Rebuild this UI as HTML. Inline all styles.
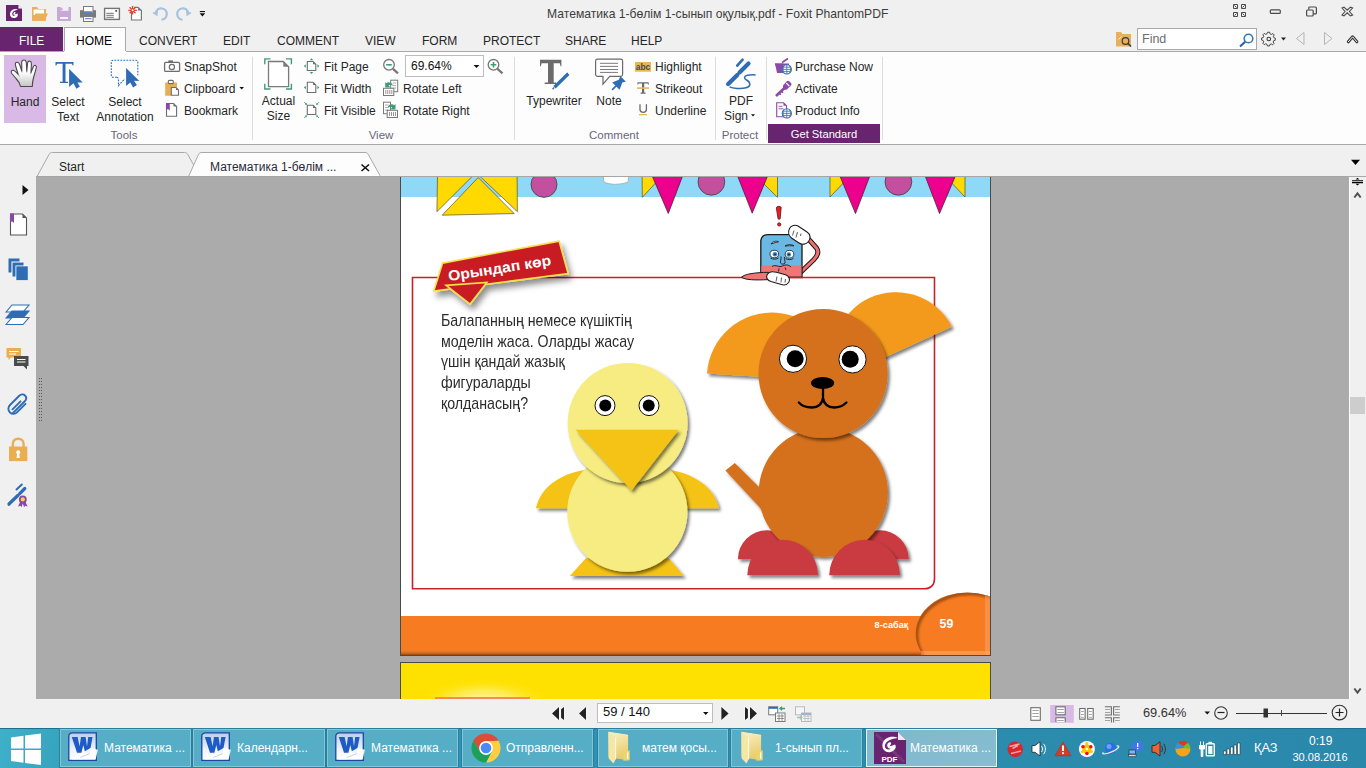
<!DOCTYPE html>
<html><head><meta charset="utf-8">
<style>
*{margin:0;padding:0;box-sizing:border-box}
html,body{width:1366px;height:768px;overflow:hidden;background:#f0f0f0;font-family:"Liberation Sans",sans-serif;position:relative}
.a{position:absolute}
.t{position:absolute;white-space:nowrap;font-size:12px;line-height:12px;color:#262626}
svg{position:absolute;overflow:visible}
</style></head><body>

<!-- ===== TITLE BAR ===== -->
<div class="a" style="left:0;top:0;width:1366px;height:51px;background:#f0f0f0"></div>
<div class="t" style="left:547px;top:8px;color:#3c3c3c;font-size:12.15px">Математика 1-бөлім 1-сынып оқулық.pdf - Foxit PhantomPDF</div>

<!-- ===== RIBBON TABS ===== -->
<div class="a" style="left:0;top:27px;width:63px;height:24px;background:#68246f"></div>
<div class="t" style="left:19px;top:35px;color:#fff">FILE</div>
<div class="a" style="left:64px;top:27px;width:62px;height:25px;background:#fdfdfd;border:1px solid #a9a9a9;border-bottom:none"></div>
<div class="t" style="left:76px;top:35px;color:#000">HOME</div>
<div class="t" style="left:139px;top:35px">CONVERT</div>
<div class="t" style="left:223px;top:35px">EDIT</div>
<div class="t" style="left:277px;top:35px">COMMENT</div>
<div class="t" style="left:365px;top:35px">VIEW</div>
<div class="t" style="left:422px;top:35px">FORM</div>
<div class="t" style="left:483px;top:35px">PROTECT</div>
<div class="t" style="left:565px;top:35px">SHARE</div>
<div class="t" style="left:631px;top:35px">HELP</div>

<!-- ===== RIBBON BODY ===== -->
<div class="a" style="left:0;top:51px;width:1366px;height:1px;background:#a9a9a9"></div>
<div class="a" style="left:64px;top:51px;width:62px;height:1px;background:#fdfdfd"></div>
<div class="a" style="left:0;top:52px;width:1366px;height:92px;background:#fdfdfd"></div>
<div class="a" style="left:0;top:144px;width:1366px;height:1px;background:#a9a9a9"></div>


<!-- Tools group -->
<div class="a" style="left:4px;top:55px;width:42px;height:68px;background:#d9bae6"></div>
<div class="t" style="left:4px;top:96px;width:42px;text-align:center">Hand</div>
<div class="t" style="left:40px;top:96px;width:56px;text-align:center">Select</div>
<div class="t" style="left:40px;top:111px;width:56px;text-align:center">Text</div>
<div class="t" style="left:94px;top:96px;width:62px;text-align:center">Select</div>
<div class="t" style="left:94px;top:111px;width:62px;text-align:center">Annotation</div>
<div class="t" style="left:184px;top:61px">SnapShot</div>
<div class="t" style="left:184px;top:83px">Clipboard</div>
<div class="t" style="left:184px;top:105px">Bookmark</div>
<div class="t" style="left:94px;top:129px;width:60px;text-align:center;color:#67677a;font-size:11.5px">Tools</div>
<div class="a" style="left:252px;top:57px;width:1px;height:83px;background:#dcdcdc"></div>
<!-- View group -->
<div class="t" style="left:256px;top:95px;width:45px;text-align:center">Actual</div>
<div class="t" style="left:256px;top:110px;width:45px;text-align:center">Size</div>
<div class="t" style="left:324px;top:61px">Fit Page</div>
<div class="t" style="left:324px;top:83px">Fit Width</div>
<div class="t" style="left:324px;top:105px">Fit Visible</div>
<div class="a" style="left:405px;top:55px;width:79px;height:22px;background:#fff;border:1px solid #bdbdbd"></div>
<div class="t" style="left:411px;top:60px;color:#111">69.64%</div>
<div class="t" style="left:403px;top:83px">Rotate Left</div>
<div class="t" style="left:403px;top:105px">Rotate Right</div>
<div class="t" style="left:351px;top:129px;width:60px;text-align:center;color:#67677a;font-size:11.5px">View</div>
<div class="a" style="left:514px;top:57px;width:1px;height:83px;background:#dcdcdc"></div>
<!-- Comment group -->
<div class="t" style="left:520px;top:95px;width:68px;text-align:center">Typewriter</div>
<div class="t" style="left:590px;top:95px;width:38px;text-align:center">Note</div>
<div class="t" style="left:655px;top:61px">Highlight</div>
<div class="t" style="left:655px;top:83px">Strikeout</div>
<div class="t" style="left:655px;top:105px">Underline</div>
<div class="t" style="left:579px;top:129px;width:70px;text-align:center;color:#67677a;font-size:11.5px">Comment</div>
<div class="a" style="left:715px;top:57px;width:1px;height:83px;background:#dcdcdc"></div>
<!-- Protect group -->
<div class="t" style="left:721px;top:95px;width:40px;text-align:center">PDF</div>
<div class="t" style="left:724px;top:110px">Sign</div>
<div class="t" style="left:707px;top:129px;width:66px;text-align:center;color:#67677a;font-size:11.5px">Protect</div>
<div class="a" style="left:766px;top:57px;width:1px;height:83px;background:#dcdcdc"></div>
<!-- Purchase group -->
<div class="t" style="left:795px;top:61px">Purchase Now</div>
<div class="t" style="left:795px;top:83px">Activate</div>
<div class="t" style="left:795px;top:105px">Product Info</div>
<div class="a" style="left:768px;top:124px;width:112px;height:19px;background:#68246f"></div>
<div class="t" style="left:768px;top:128px;width:112px;text-align:center;color:#fff;font-size:11.2px">Get Standard</div>
<div class="a" style="left:882px;top:57px;width:1px;height:83px;background:#dcdcdc"></div>


<!-- ===== ICON OVERLAY (chrome) ===== -->
<svg style="left:0;top:0" width="1366" height="768" viewBox="0 0 1366 768">
<defs>
<linearGradient id="handg" x1="0" y1="0" x2="0" y2="1"><stop offset="0.45" stop-color="#fff"/><stop offset="1" stop-color="#c4c4c4"/></linearGradient>
</defs>
<!-- title bar: foxit logo -->
<path d="M6 5H18.5L22 8.5V21H6Z" fill="#68246f"/>
<path d="M18.5 5V8.5H22" fill="#fff"/>
<path d="M18 9.5C15 8 10.5 9.5 10 13.5C9.7 17 12.5 18.5 15 18C17.5 17.5 18.5 15 17.5 13.5L14.5 14.5L15.5 13C16 12 14 11.5 13.5 13C13 14.5 14 16 15.5 15.5C13 17 11.5 14.5 12.5 12.5C13.5 10.5 16.5 10 18 9.5Z" fill="#fff"/>
<!-- folder -->
<path d="M32 7H37L38.5 9H46V20.8H32Z" fill="#e8b05a"/>
<path d="M33.5 9.5H44V15H33.5Z" fill="#fff"/>
<path d="M35.5 13.5H48L44.5 20.8H32Z" fill="#e8b05a"/>
<!-- save -->
<rect x="57" y="7" width="14" height="14" fill="#c8a8d4"/>
<rect x="60.8" y="7" width="7.7" height="3.8" fill="#f3eef5"/>
<rect x="61" y="7.8" width="1.5" height="2.5" fill="#c8a8d4"/>
<rect x="60" y="17" width="8" height="2" fill="#f7f3f8"/>
<!-- printer -->
<path d="M80 10.2H96V17.6H80Z" fill="#7a7a7a"/>
<rect x="83.5" y="6.5" width="9.5" height="7" fill="#fff" stroke="#7a7a7a" stroke-width="1"/>
<rect x="84" y="11.3" width="8.5" height="1.6" fill="#3e7cc4"/>
<rect x="83.5" y="16.5" width="9.5" height="5" fill="#fff" stroke="#7a7a7a" stroke-width="1"/>
<rect x="85" y="18.2" width="6.5" height="1" fill="#3e7cc4"/>
<!-- email -->
<rect x="104.6" y="8.4" width="14.8" height="11" fill="#fff" stroke="#747474" stroke-width="1.4"/>
<rect x="115.3" y="10" width="1.8" height="1.8" fill="#1f5fb4"/>
<path d="M106.3 13.3H113.8M106.3 15.3H113.8M106.3 17.3H113.8" stroke="#747474" stroke-width="1"/>
<!-- new -->
<path d="M131.5 9.5V20H141.4V10.5L138 7.3H134" fill="#fff" stroke="#777" stroke-width="1.2"/>
<path d="M138 7.3V10.5H141.4Z" fill="#777"/>
<path d="M132.6 6V14.6M128.3 10.3H136.9M129.6 7.3L135.6 13.3M135.6 7.3L129.6 13.3" stroke="#d9472a" stroke-width="1.3"/>
<circle cx="132.6" cy="10.3" r="1" fill="#fff"/>
<!-- undo/redo -->
<path d="M155.8 12.5A5.6 5.6 0 1 1 161.5 19.6" fill="none" stroke="#a6c2de" stroke-width="2.2"/>
<path d="M152.3 13L158 10.5L157.5 16.3Z" fill="#a6c2de"/>
<path d="M188.2 12.5A5.6 5.6 0 1 0 182.5 19.6" fill="none" stroke="#a6c2de" stroke-width="2.2"/>
<path d="M191.7 13L186 10.5L186.5 16.3Z" fill="#a6c2de"/>
<rect x="199.8" y="11" width="5.2" height="1.1" fill="#111"/>
<path d="M199.6 13.2H205.2L202.4 16.6Z" fill="#111"/>

<!-- window controls -->
<g stroke="#4a4a4a" stroke-width="1.2" fill="none">
<path d="M1233.5 4.5H1237.5V8.5M1233.5 4.5V8.5H1237.5M1234.5 5.5L1236.5 7.5M1241.5 4.5H1245.5V8.5H1241.5ZM1242.5 7.5L1244.5 5.5M1233.5 12.5H1237.5V16.5H1233.5ZM1234.5 15.5L1236.5 13.5M1241.5 12.5H1245.5V16.5H1241.5ZM1242.5 13.5L1244.5 15.5" stroke-width="1"/>
<rect x="1270.3" y="9.8" width="10" height="3.6" rx="1"/>
<rect x="1306.6" y="10" width="6.6" height="6" rx="1"/>
<path d="M1308.8 9.8V7.8C1308.8 7.3 1309.1 7 1309.6 7H1315.4C1315.9 7 1316.4 7.4 1316.4 7.9V12.9C1316.4 13.4 1316 13.8 1315.4 13.8H1313.4"/>
</g>
<path d="M1342 8L1344 7.2L1347.2 10.2L1350.4 7.2L1352.6 8L1349.4 11.5L1352.6 15L1350.4 15.8L1347.2 12.8L1344 15.8L1342 15L1345 11.5Z" fill="none" stroke="#4a4a4a" stroke-width="1.1"/>

<!-- find row -->
<path d="M1116 32H1121L1122.5 34H1131V46.5H1116Z" fill="#e8b05a"/>
<circle cx="1125.5" cy="41" r="3.3" fill="#e8b05a" stroke="#3a3a3a" stroke-width="1.2"/>
<path d="M1127.8 43.3L1131 46.5" stroke="#3a3a3a" stroke-width="1.6"/>
<path d="M1118.5 39.5L1121.5 36.5" stroke="#fff" stroke-width="0.8"/>
<rect x="1137.5" y="28.5" width="119" height="21" fill="#fff" stroke="#a8a8a8" stroke-width="1"/>
<circle cx="1248.5" cy="38.5" r="4.3" fill="none" stroke="#2c7bbf" stroke-width="1.6"/>
<path d="M1245.2 41.8L1240 46.5" stroke="#2a5ea0" stroke-width="2"/>
<!-- gear -->
<g transform="translate(1268.8,39)">
<path d="M-1.3 -7.3H1.3L1.8 -5.2L3.6 -4.4L5.4 -5.6L7.2 -3.8L6 -2L6.8 -0.2L8.5 0.4V3L6.6 3.5L5.7 5.3L6.9 7.1L5.1 8.9L3.3 7.7L1.5 8.5L1 10.3H-1.6L-2.1 8.3L-3.9 7.5L-5.7 8.7L-7.5 6.9L-6.3 5.1L-7.1 3.3L-9 2.7V0.1L-7 -0.4L-6.2 -2.2L-7.4 -4L-5.6 -5.8L-3.8 -4.6L-2 -5.4Z" transform="scale(0.78) translate(-0.2,-1.4)" fill="none" stroke="#3a3a3a" stroke-width="1.2"/>
<circle cx="0" cy="0" r="1.8" fill="none" stroke="#3a3a3a" stroke-width="1.1"/>
</g>
<path d="M1281 37.5H1286L1283.5 40.5Z" fill="#222"/>
<path d="M1304 32.5L1296.5 38.5L1304 44.5Z" fill="none" stroke="#b5b5b5" stroke-width="1"/>
<path d="M1324.5 32.5L1332 38.5L1324.5 44.5Z" fill="none" stroke="#b5b5b5" stroke-width="1"/>
<path d="M1348.3 41.8L1352.6 36.8L1356.9 41.8" fill="none" stroke="#3a3a3a" stroke-width="3" stroke-linejoin="round" stroke-linecap="round"/><path d="M1348.3 41.8L1352.6 36.8L1356.9 41.8" fill="none" stroke="#f0f0f0" stroke-width="1" stroke-linejoin="round" stroke-linecap="round"/>

<!-- Hand -->
<path d="M20.5 86.5C19.8 83 18 80.5 16 78.5L11.8 73.5C10.6 72 11.3 70.2 13 70.3C14.5 70.4 16 72 18.2 74.5L15.5 65.5C15 63.5 15.6 62.2 17 62.2C18.3 62.2 19.2 63.2 19.8 65L21.8 71L21.7 62.5C21.7 60.8 22.6 60 24 60C25.4 60 26.2 61 26.3 62.5L26.8 71.2L27.6 63C27.8 61.7 28.6 60.9 29.8 61.1C31 61.3 31.5 62.3 31.4 63.7L31 72.5L33.2 67C33.7 65.7 34.6 65.1 35.5 65.5C36.4 65.9 36.6 66.9 36.2 68.2L33.3 78.5C32.5 81.5 32.4 83.5 32.3 86.5Z" fill="url(#handg)" stroke="#4a4a4a" stroke-width="1.1" stroke-linejoin="round"/>
<path d="M18.2 74.5L19.5 76.5M21.8 71L22 72.5M26.8 71.2V72.5M31 72.5L30.7 74" stroke="#777" stroke-width="0.7"/>

<!-- Select Text -->
<path d="M55.5 62H73.5V65.5L72.8 65.5L71.8 63.8H65.5V81.8H68V83H60V81.8H62.6V63.8H57.2L56.2 65.5H55.5Z" fill="#2e6db4"/>
<path d="M69.1 68.9V87L73.5 83.3L76.4 88.7L79.9 86.6L77.4 82.4L82.8 82.4Z" fill="#2e6db4"/>
<!-- Select Annotation -->
<path d="M116.8 77.3H113.2C112 77.3 111.3 76.6 111.3 75.3V62.2C111.3 61 112 60.2 113.2 60.2H135.8C137 60.2 137.8 61 137.8 62.2V75.3" fill="none" stroke="#2e6db4" stroke-width="1.1" stroke-dasharray="1.8 1.2"/>
<path d="M116.8 77.3C118 77.5 118.5 78.2 118.5 79.5V85.6L124.8 78.8" fill="none" stroke="#2e6db4" stroke-width="1.1" stroke-dasharray="1.8 1.2"/>
<path d="M126.1 67.9V86L130.3 82.6L133.1 87.4L136.9 85L134 80.8L139.4 81Z" fill="#2e6db4"/>

<!-- SnapShot -->
<rect x="164.6" y="62.4" width="15" height="9" rx="1.2" fill="#fff" stroke="#6d6d6d" stroke-width="1.3"/>
<rect x="168.3" y="60.4" width="4.6" height="2.2" fill="#6d6d6d"/>
<circle cx="171.9" cy="67" r="2.6" fill="none" stroke="#6d6d6d" stroke-width="1.2"/>
<!-- Clipboard -->
<path d="M165.2 82.5H177V87H171V95.8H165.2Z" fill="#e9ad52"/>
<rect x="168.3" y="80.4" width="5" height="3.2" rx="1" fill="#fff" stroke="#6d6d6d" stroke-width="1.1"/>
<path d="M171.3 87.5H176L178.5 90V95.3H171.3Z" fill="#fff" stroke="#6d6d6d" stroke-width="1.1"/>
<path d="M176 87.5V90H178.5Z" fill="#6d6d6d"/>
<!-- Bookmark -->
<path d="M166.5 103.5H173.5L176.6 106.6V116.3H166.5Z" fill="#fff" stroke="#6d6d6d" stroke-width="1.1"/>
<path d="M173.5 103.5V106.6H176.6Z" fill="#6d6d6d"/>
<path d="M166 103H169.8V110.5L167.9 109L166 110.5Z" fill="#8748a7"/>
<path d="M239.4 87H244L241.7 89.6Z" fill="#111"/>

<!-- Actual Size -->
<path d="M264.8 64.2V58.9H270.5M286 58.9H291.4V64.2M264.8 83.8V89H270.5M286 89H291.4V83.8" fill="none" stroke="#3a9e74" stroke-width="1.4"/>
<path d="M268.5 61.5H283.3L288.6 66.8V86.6H268.5Z" fill="#fff" stroke="#7a7a7a" stroke-width="1.3"/>
<path d="M283.3 61.5V66.8H288.6Z" fill="#7a7a7a"/>
<!-- Fit Page -->
<path d="M307.3 61.5H313L315.8 64.3V70.5H307.3Z" fill="#fff" stroke="#6d6d6d" stroke-width="1.1"/>
<path d="M313 61.5V64.3H315.8Z" fill="#6d6d6d"/>
<path d="M303.8 66L305.8 64.2V67.8ZM319.4 66L317.4 64.2V67.8ZM311.5 58.2L309.7 60.2H313.3ZM311.5 74L309.7 72H313.3Z" fill="#3a9e74"/>
<!-- Fit Width -->
<path d="M307.3 82.3H313L315.8 85.1V92.5H307.3Z" fill="#fff" stroke="#6d6d6d" stroke-width="1.1"/>
<path d="M313 82.3V85.1H315.8Z" fill="#6d6d6d"/>
<path d="M303.8 87.5L305.8 85.7V89.3ZM319.4 87.5L317.4 85.7V89.3Z" fill="#3a9e74"/>
<!-- Fit Visible -->
<path d="M307.3 105.3H313L315.8 108.1V114.5H307.3Z" fill="#fff" stroke="#6d6d6d" stroke-width="1.1"/>
<path d="M313 105.3V108.1H315.8Z" fill="#6d6d6d"/>
<path d="M304.2 102.2L306.6 104.6M319 102.2L316.6 104.6M304.2 118L306.6 115.6M319 118L316.6 115.6" stroke="#3a9e74" stroke-width="1"/>
<path d="M306.8 104.8V102.8L304.8 104.8ZM316.4 104.8V102.8L318.4 104.8ZM306.8 115.4V117.4L304.8 115.4ZM316.4 115.4V117.4L318.4 115.4Z" fill="#3a9e74"/>
<!-- zoom out/in -->
<circle cx="389" cy="64.8" r="5.3" fill="#fff" stroke="#777" stroke-width="1.3"/>
<path d="M386.2 64.8H391.8" stroke="#3a9e74" stroke-width="1.6"/>
<path d="M393 68.9L398 73.4" stroke="#777" stroke-width="2.2"/>
<circle cx="493.5" cy="64.8" r="5.3" fill="#fff" stroke="#777" stroke-width="1.3"/>
<path d="M490.7 64.8H496.3M493.5 62V67.6" stroke="#3a9e74" stroke-width="1.6"/>
<path d="M497.5 68.9L502.5 73.4" stroke="#777" stroke-width="2.2"/>
<path d="M473.5 65H479.5L476.5 68Z" fill="#111"/>
<!-- Rotate Left -->
<rect x="390.7" y="80.2" width="7" height="11.5" fill="#fff" stroke="#7a7a7a" stroke-width="1"/>
<path d="M392.5 83H396M392.5 85.5H396M392.5 88H396" stroke="#9a9a9a" stroke-width="0.8"/>
<rect x="383.5" y="88.3" width="10.3" height="7.2" fill="#fff" stroke="#7a7a7a" stroke-width="1"/>
<path d="M385.8 90V94M387.8 90V94M389.8 90V94M391.8 90V94" stroke="#8a8a8a" stroke-width="0.9"/>
<path d="M392.5 84.5C391 81.8 387.8 81.6 386.3 83.2L385.2 82V87.5H390.5L388.5 85.6C389.8 84.5 391 84.8 392.5 85.5Z" fill="#3a9e74"/>
<!-- Rotate Right -->
<rect x="383.5" y="102.2" width="7" height="11.5" fill="#fff" stroke="#7a7a7a" stroke-width="1"/>
<path d="M385 105H388.5M385 107.5H388.5M385 110H388.5" stroke="#9a9a9a" stroke-width="0.8"/>
<rect x="387.2" y="110.3" width="10.3" height="7.2" fill="#fff" stroke="#7a7a7a" stroke-width="1"/>
<path d="M389.5 112V116M391.5 112V116M393.5 112V116M395.5 112V116" stroke="#8a8a8a" stroke-width="0.9"/>
<path d="M388 106.5C389.5 103.8 392.7 103.6 394.2 105.2L395.5 104V109.5H390.2L392.2 107.6C390.9 106.5 389.5 106.8 388 107.5Z" fill="#3a9e74"/>

<!-- Typewriter -->
<path d="M540 59.8H561.4V66.2L560.6 66.2L559.8 63.2H553.7V82.6H556V84.1H544.7V82.6H548V63.2H541.6L540.8 66.2H540Z" fill="#6b6b6b"/>
<path d="M554.5 87.2L568.5 73.5" stroke="#2e6db4" stroke-width="3.3"/>
<path d="M552.6 89.3L554 87.5" stroke="#2e6db4" stroke-width="1.4"/>
<path d="M567.5 72.5L570.2 75.2" stroke="#fff" stroke-width="0.8"/>
<!-- Note -->
<path d="M597.5 59.2H620.8C621.9 59.2 622.6 59.9 622.6 61V74.5C622.6 75.6 621.9 76.3 620.8 76.3H609.7L603 84.2V76.3H597.5C596.3 76.3 595.6 75.6 595.6 74.5V61C595.6 59.9 596.3 59.2 597.5 59.2Z" fill="#fff" stroke="#6a6a6a" stroke-width="1.2"/>
<path d="M600 63.3H618M600 66.4H618M600 69.5H618M600 72.4H618" stroke="#6a6a6a" stroke-width="0.9"/>
<path d="M612.6 89.4L616.5 85.5" stroke="#2e6db4" stroke-width="1.7" stroke-linecap="round"/>
<path d="M620.4 76.2L625.8 81.6L622.3 82.6L619.6 89.7L614.8 85L612.2 82.4L618.8 79.8Z" fill="#2e6db4"/>
<!-- Highlight -->
<rect x="635" y="62" width="16" height="9.7" fill="#e9b55a"/>
<text x="643" y="70" font-family="Liberation Sans" font-size="9.5" font-weight="bold" fill="#4a4a4a" text-anchor="middle" textLength="14.5" lengthAdjust="spacingAndGlyphs">abc</text>
<!-- Strikeout -->
<path d="M637.5 82.3H648.7V84.8H648.2L647.7 83.5H644.2V92.5H645.6V93.7H640.6V92.5H642V83.5H638.5L638 84.8H637.5Z" fill="#6b6b6b"/>
<rect x="637" y="87.3" width="12" height="1.6" fill="#e9b55a"/>
<!-- Underline -->
<path d="M640 104.2V109.6C640 111.3 641.2 112.4 643.2 112.4C645.2 112.4 646.4 111.3 646.4 109.6V104.2" fill="none" stroke="#6b6b6b" stroke-width="1.3"/>
<rect x="639" y="114" width="8" height="1.3" fill="#e9b55a"/>

<!-- PDF Sign -->
<path d="M728.2 84L737.3 75" stroke="#2e6db4" stroke-width="4.2" stroke-linecap="round"/>
<path d="M739.5 72.6L748.5 63.5" stroke="#2e6db4" stroke-width="4.2" stroke-linecap="round"/>
<path d="M737.2 65.6L742.6 59.6" stroke="#2e6db4" stroke-width="2.6" stroke-linecap="round"/>
<path d="M726.6 85.2L728.5 83" stroke="#2e6db4" stroke-width="1.6"/>
<path d="M729.5 86.8C733 88.5 741 89 746 87.8C751 86.5 751 82.5 746.5 80C743.5 78.3 744 76 747.5 75.2C750 74.7 753 74.8 755.6 74.9" fill="none" stroke="#2e6db4" stroke-width="1.5"/>
<path d="M751 114.2H755L753 116.4Z" fill="#111"/>

<!-- Purchase Now -->
<path d="M775 63.5H783.5V73H777Z" fill="#8b4aa5"/>
<path d="M775 63.5H789V65.5H775Z" fill="#8b4aa5"/>
<path d="M782 62.5L788 58.5" stroke="#8b4aa5" stroke-width="1.6"/>
<circle cx="786.8" cy="69.4" r="4.6" fill="#fff" stroke="#2e6db4" stroke-width="1.1"/>
<path d="M782.2 69.4H791.4M786.8 64.8V74M784 65.8C782.8 68 782.8 71 784 73M789.6 65.8C790.8 68 790.8 71 789.6 73M783 67.2H790.6M783 71.6H790.6" stroke="#2e6db4" stroke-width="0.8" fill="none"/>
<!-- Activate -->
<path d="M783 85.5L786.8 81.2C787.5 80.5 788.5 80.5 789.2 81.2L791 83C791.7 83.7 791.7 84.7 791 85.4L786.8 89.4C786 90 785 90 784.4 89.4L783 88Z" fill="#8b4aa5"/>
<path d="M786.2 83L789.2 86" stroke="#fff" stroke-width="1.1"/>
<path d="M784.5 88L776 96" stroke="#8b4aa5" stroke-width="2.6"/>
<path d="M779 93L780.8 94.8M781.3 91L783 92.8" stroke="#8b4aa5" stroke-width="1.5"/>
<!-- Product Info -->
<path d="M776.7 102.7H783.5L786.5 105.7V116.8H776.7Z" fill="#fff" stroke="#8b4aa5" stroke-width="1.1"/>
<path d="M783.5 102.7V105.7H786.5Z" fill="#8b4aa5"/>
<path d="M778.5 106.3H782.5M778.5 108.8H783.5" stroke="#8b4aa5" stroke-width="0.9"/>
<circle cx="786.8" cy="113.4" r="4.6" fill="#fff" stroke="#2e6db4" stroke-width="1.1"/>
<path d="M782.2 113.4H791.4M786.8 108.8V118M784 109.8C782.8 112 782.8 115 784 117M789.6 109.8C790.8 112 790.8 115 789.6 117M783 111.2H790.6M783 115.6H790.6" stroke="#2e6db4" stroke-width="0.8" fill="none"/>
</svg>

<div class="t" style="left:1142px;top:33px;color:#6d6d6d;font-size:12.5px">Find</div>
<!-- ===== DOC TABS ===== -->


<svg style="left:0;top:145px" width="1366" height="32" viewBox="0 145 1366 32">
<path d="M37 176.5L49 154.5C49.8 153 50.8 152.5 52.5 152.5H184.5C186 152.5 187 153 187.8 154.5L200 176.5" fill="#f0f0f0" stroke="#a9a9a9" stroke-width="1"/>
<path d="M188.5 176.5L198.5 154.5C199.3 153 200.3 152.5 202 152.5H365C366.5 152.5 367.5 153 368.3 154.5L380.5 176.5" fill="#fdfdfd" stroke="#a9a9a9" stroke-width="1"/>
<path d="M361.5 164.5L369 171M369 164.5L361.5 171" stroke="#111" stroke-width="1.6"/>
<path d="M1351 159.8H1360L1355.5 165Z" fill="#000"/>
</svg>
<div class="t" style="left:59px;top:161px">Start</div>
<div class="t" style="left:210px;top:161px;color:#2a2a3a">Математика 1-бөлім ...</div>

<!-- ===== CONTENT ===== -->
<div class="a" style="left:0;top:176px;width:36px;height:523px;background:#f0f0f0"></div>
<div class="a" style="left:36px;top:176px;width:1313px;height:523px;background:#ababab"></div>
<div class="a" style="left:1349px;top:176px;width:17px;height:523px;background:#f0f0f0"></div>
<div class="a" style="left:1349px;top:176px;width:17px;height:1px;background:#a9a9a9"></div>



<!-- ===== PDF PAGE ===== -->
<svg style="left:36px;top:176px" width="1313" height="523" viewBox="36 176 1313 523">
<defs>
<filter id="ds" x="-20%" y="-20%" width="150%" height="150%"><feDropShadow dx="2.2" dy="2.6" stdDeviation="1.6" flood-color="#000" flood-opacity="0.5"/></filter>
<filter id="ds2" x="-20%" y="-30%" width="150%" height="180%"><feDropShadow dx="3" dy="5" stdDeviation="3" flood-color="#000" flood-opacity="0.45"/></filter>
<filter id="blur1"><feGaussianBlur stdDeviation="1.2"/></filter>
<filter id="ishadow" x="-10%" y="-10%" width="120%" height="120%">
<feOffset dx="2.5" dy="2.5"/><feGaussianBlur stdDeviation="1.6" result="o"/>
<feComposite in="SourceGraphic" in2="o" operator="out" result="edge"/>
</filter>
<linearGradient id="obot" x1="0" y1="0" x2="0" y2="1"><stop offset="0" stop-color="#f47b20" stop-opacity="0"/><stop offset="1" stop-color="#8a4a18"/></linearGradient>
<clipPath id="pg1"><rect x="401" y="177" width="589" height="478"/></clipPath>
<radialGradient id="ylglow" cx="0.5" cy="0.5" r="0.5"><stop offset="0" stop-color="#fff9c0"/><stop offset="0.5" stop-color="#ffef70" stop-opacity="0.7"/><stop offset="1" stop-color="#ffe100" stop-opacity="0"/></radialGradient>
</defs>
<rect x="36" y="176" width="1313" height="1" fill="#a6a6a6"/>
<!-- page 1 -->
<rect x="400" y="177" width="591" height="479" fill="#4a4a4a"/>
<rect x="401" y="177" width="589" height="478" fill="#fff"/>
<g clip-path="url(#pg1)">
<rect x="401" y="177" width="589" height="20" fill="#8fd8f6"/>
<!-- top-left yellow shapes -->
<g fill="#ffd900" stroke="#3a3a2a" stroke-width="0.6">
<path d="M437.5 176L472.6 176L436.9 211.7Z"/>
<path d="M479.6 176L517.1 176L517.4 211.7Z"/>
<path d="M478.2 177.5L514.2 213.6L442.2 215.2Z"/>
</g>
<circle cx="544" cy="184.4" r="13" fill="#c2509e" stroke="#333" stroke-width="0.7"/>
<path d="M603.5 176V181C603.5 183 612 184.5 616 184.3C621 184 628.4 183 628.4 181V176Z" fill="#fff" stroke="#9aaab5" stroke-width="0.8"/>
<!-- bunting -->
<g fill="#ffd900" stroke="#3a3a2a" stroke-width="0.6">
<path d="M642.1 176H662L642.3 197.4Z"/>
<path d="M756 176H777.5V197.4Z"/>
<path d="M830 176H850L830 197Z"/>
<path d="M945 176H965V197Z"/>
</g>
<g fill="#ec008c" stroke="#3a1a2a" stroke-width="0.7">
<path d="M652.2 176H682.6L668.3 213.5Z"/>
<path d="M737.6 176H767.6L752.2 213.2Z"/>
<path d="M839.9 176H869.8L855.5 213.6Z"/>
<path d="M925.2 176H955.4L939.5 213.6Z"/>
</g>
<circle cx="711.4" cy="181.8" r="13.4" fill="#c2509e" stroke="#333" stroke-width="0.7"/>
<circle cx="898.4" cy="181.8" r="13.4" fill="#c2509e" stroke="#333" stroke-width="0.7"/>

<!-- red box -->
<path d="M412.5 277.5H934.5V579C934.5 585 930.5 588.8 924.5 588.8H412.5Z" fill="none" stroke="#cc1f2b" stroke-width="1.6"/>

<!-- banner -->
<g filter="url(#ds2)">
<path d="M433.8 291L442.6 263.1L559.1 241.1L568.1 273.6Z" fill="#c81e24" stroke="#f5e04a" stroke-width="1.6" stroke-linejoin="miter"/>
<path d="M446.1 285.4L486.8 282.4L470.1 304.1Z" fill="#c81e24" stroke="#f5e04a" stroke-width="1.6"/>
</g>
<text x="449" y="281" transform="rotate(-8.8 449 281)" font-family="Liberation Sans" font-weight="bold" font-size="14.5" fill="#fff" textLength="104" lengthAdjust="spacingAndGlyphs">Орындап көр</text>

<!-- mascot -->
<path d="M776.3 207.8C776.8 206 780.6 205.8 781.2 207.6L780.2 218.6C779.9 219.6 778.3 219.6 778 218.6Z" fill="#ee1c25" stroke="#3a0a0a" stroke-width="0.7"/>
<circle cx="779.2" cy="224.4" r="1.7" fill="#ee1c25" stroke="#3a0a0a" stroke-width="0.6"/>
<path d="M801.5 271.5L813.5 260C818 255.5 819 251.5 816.5 248L808 238.5" fill="none" stroke="#1a1a1a" stroke-width="5" stroke-linecap="round" stroke-linejoin="round"/>
<path d="M801.5 271.5L813.5 260C818 255.5 819 251.5 816.5 248L808 238.5" fill="none" stroke="#f07070" stroke-width="3" stroke-linecap="round" stroke-linejoin="round"/>
<path d="M760.8 277V242C760.8 237.5 763.5 234.6 768 234.6H796C799.8 234.6 802 237 802 241V277Z" fill="#6cb8e4" stroke="#1a1a1a" stroke-width="1.3"/>
<path d="M761.5 266C766 264.5 772 267 778 265.5C785 264 792 266.5 801.3 265V276.5H761.5Z" fill="#f07575"/>
<path d="M772 266.5C776 264 779 268 782.5 266C786 264 789 265 791 267M779 268.5L778.5 271.5M785 267.5L786 270" fill="none" stroke="#1a1a1a" stroke-width="0.9"/>
<path d="M771 244C772.5 241.5 776 240.5 778.5 241.8C776.5 242 774 243 771 244Z" fill="#fff" stroke="#1a1a1a" stroke-width="0.9"/>
<path d="M785 246C787.5 244.3 791.5 244 794 245.8C791 245.6 788 245.6 785 246Z" fill="#fff" stroke="#1a1a1a" stroke-width="0.9"/>
<ellipse cx="774.3" cy="254" rx="4.3" ry="3.8" fill="#fff" stroke="#1a1a1a" stroke-width="0.8"/>
<ellipse cx="789.5" cy="254.2" rx="4.3" ry="3.8" fill="#fff" stroke="#1a1a1a" stroke-width="0.8"/>
<circle cx="775" cy="254.3" r="2.3" fill="#3d86c9"/>
<circle cx="788.8" cy="254.5" r="2.3" fill="#3d86c9"/>
<circle cx="775" cy="254.3" r="0.9" fill="#1a1a1a"/>
<circle cx="788.8" cy="254.5" r="0.9" fill="#1a1a1a"/>
<path d="M770.5 258C773 259.5 776.5 259.5 778.5 258M785.5 258.5C788 260 791.5 260 793.5 258.3M781 256.5C781.5 259 780 261.5 780.5 263C781.5 264.5 784 264.5 785 263C785.5 261 784 259 784.5 257" fill="none" stroke="#1a1a1a" stroke-width="0.9"/>
<path d="M789.5 228.5C791 225.5 795 224.3 798 226L807 232C810.5 234.3 811 238.5 808.5 241.5C806 244.5 802 245 799 243L791.5 238C788.5 235.5 788 231.5 789.5 228.5Z" fill="#fff" stroke="#1a1a1a" stroke-width="1.1"/>
<path d="M794 230.5L792.5 235.5M797.5 232L796 237.5M801 233.5L800.5 236" fill="none" stroke="#1a1a1a" stroke-width="0.7"/>
<path d="M758 277.5H803" stroke="#cc1f2b" stroke-width="1.6"/>
<path d="M741.5 277.2C744.5 274 755 272.5 768.5 272.3L768.5 279.6C755 280.3 745 280 741.5 277.2Z" fill="#f07575" stroke="#1a1a1a" stroke-width="1"/>
<path d="M767 275C768.5 272 772.5 271.2 776.5 272.3L785.5 274.8C789 276 790.5 279.5 788.8 282.3C787 285 783.5 285.5 780.5 284.3L771 281.5C767.5 280.3 765.8 277.8 767 275Z" fill="#fff" stroke="#1a1a1a" stroke-width="1.1"/>
<path d="M777 276.5L776 281.5M781.5 277.5L781 282.5M785.5 279L785 282.5" fill="none" stroke="#1a1a1a" stroke-width="0.7"/>

<!-- chick -->
<g filter="url(#ds)">
<path d="M535.9 508.3C540 488 560 472 592 469L592 508.3Z" fill="#f4c314"/>
<path d="M718.7 508.3C714.6 488 694.6 472 662.6 469L662.6 508.3Z" fill="#f4c314"/>
<path d="M569.8 576H684L668.7 558.2H585.8Z" fill="#f4c314"/>
</g>
<circle cx="627.3" cy="511.7" r="60.1" fill="#f7ec82" filter="url(#ds)"/>
<circle cx="627.6" cy="423" r="60" fill="#f7ec82" filter="url(#ds)"/>
<path d="M575.6 429.7H678.8L631.5 490.5Z" fill="#f4c314" filter="url(#ds)"/>
<g stroke="#111" stroke-width="1">
<circle cx="605" cy="405.6" r="10" fill="#fff"/>
<circle cx="649" cy="405.6" r="10" fill="#fff"/>
</g>
<circle cx="605.3" cy="405.6" r="6" fill="#000"/>
<circle cx="648.7" cy="405.6" r="6" fill="#000"/>

<!-- dog -->
<g filter="url(#ds)">
<path d="M707 373.4A65 65 0 0 1 836.8 381.8Z" fill="#f39a1f"/>
<path d="M838 378.7A62.6 62.6 0 0 1 951.8 326.7Z" fill="#f39a1f"/>
<path d="M725.4 470.6L734.8 462.9L775 503L765 513Z" fill="#d5711a"/>
<path d="M737.9 559.2A29 29 0 0 1 795.9 559.2Z" fill="#c93a3f"/>
<path d="M850.75 559.2A29 29 0 0 1 908.75 559.2Z" fill="#c93a3f"/>
</g>
<circle cx="823.3" cy="492.4" r="64.6" fill="#d5711a" filter="url(#ds)"/>
<g filter="url(#ds)">
<path d="M747.3 575.2A35.4 35.4 0 0 1 818.1 575.2Z" fill="#c93a3f"/>
<path d="M829.2 575.2A35.4 35.4 0 0 1 900 575.2Z" fill="#c93a3f"/>
</g>
<circle cx="823.1" cy="373.5" r="64.6" fill="#d5711a" filter="url(#ds)"/>
<g stroke="#111" stroke-width="1">
<circle cx="793" cy="358.8" r="13.6" fill="#fff"/>
<circle cx="852.5" cy="359.4" r="13.6" fill="#fff"/>
</g>
<circle cx="795.2" cy="358.8" r="8.5" fill="#000"/>
<circle cx="850.2" cy="359.3" r="8.5" fill="#000"/>
<ellipse cx="822.6" cy="383" rx="11.6" ry="6" fill="#000"/>
<path d="M823 388V398C822 404 818 407.5 812 407.5C806 407.5 801 405 798.8 402.5M823 398C824 404 828 407.5 834.2 407.5C840 407.5 844 405 846.4 402.5" fill="none" stroke="#000" stroke-width="2.3" stroke-linecap="round"/>

<!-- footer -->
<rect x="401" y="616" width="589" height="39" fill="#f67b21"/>
<rect x="401" y="650" width="520" height="5" fill="url(#obot)"/>
<ellipse cx="967.4" cy="633.3" rx="51.8" ry="40.8" fill="#f67b21"/>
<clipPath id="fcirc"><ellipse cx="967.4" cy="633.3" rx="51.8" ry="40.8"/></clipPath>
<g clip-path="url(#fcirc)"><ellipse cx="969.4" cy="635.3" rx="52.8" ry="41.8" fill="none" stroke="#7a3a08" stroke-width="3.5" opacity="0.7" filter="url(#blur1)"/>
<rect x="915" y="651" width="80" height="4" fill="#f9a86a" opacity="0.6"/><rect x="985" y="590" width="5" height="70" fill="#f9a86a" opacity="0.5"/></g>
<text x="874.6" y="628" font-family="Liberation Sans" font-weight="bold" font-size="9" fill="#fff" textLength="33.7" lengthAdjust="spacingAndGlyphs">8-сабақ</text>
<text x="939.6" y="628" font-family="Liberation Sans" font-weight="bold" font-size="12.3" fill="#fff" textLength="13.7" lengthAdjust="spacingAndGlyphs">59</text>
</g>
<!-- page 2 -->
<rect x="400" y="662" width="591" height="40" fill="#4a4a4a"/>
<rect x="401" y="663" width="589" height="40" fill="#ffe100"/>
<ellipse cx="484" cy="702" rx="66" ry="24" fill="url(#ylglow)"/>
<rect x="435" y="697" width="95" height="2" fill="#f58a5a"/>
</svg>


<div class="a" style="left:441px;top:309.5px;width:260px;transform:scale(0.935,1.05);transform-origin:0 0;font-size:15.2px;line-height:19.72px;color:#2b2b2b;white-space:nowrap">Балапанның немесе күшіктің<br>моделін жаса. Оларды жасау<br>үшін қандай жазық<br>фигураларды<br>қолданасың?</div>
<!-- left nav panel icons -->
<svg style="left:0;top:176px" width="36" height="522" viewBox="0 176 36 522">
<path d="M22.5 185V195L28.5 190Z" fill="#111"/>
<!-- bookmarks -->
<path d="M10.5 214H22.5L26.5 218V235H10.5Z" fill="#fff" stroke="#555" stroke-width="1.1"/>
<path d="M22.5 214V218H26.5Z" fill="#555"/>
<path d="M10 213.5H14V223L12 221.3L10 223Z" fill="#8748a7"/>
<!-- pages -->
<rect x="8.5" y="258.5" width="11" height="14" fill="#2e6db4"/>
<rect x="11.5" y="261.5" width="11" height="14" fill="#fff"/>
<rect x="12.5" y="262.5" width="11" height="14" fill="#2e6db4"/>
<rect x="15.5" y="265.5" width="12" height="14.5" fill="#fff"/>
<rect x="16.3" y="266.3" width="11.5" height="13.8" fill="#2e6db4"/>
<!-- layers -->
<path d="M6 312L12 305H29L23 312Z" fill="#fff" stroke="#2e6db4" stroke-width="1.1"/>
<path d="M6 318L12 311H29L23 318Z" fill="#2e6db4" stroke="#2e6db4" stroke-width="1.1"/>
<path d="M6 324.5L12 317.5H29L23 324.5Z" fill="#fff" stroke="#2e6db4" stroke-width="1.1"/>
<!-- comments -->
<path d="M6.5 348H21V357.5H11L8.5 360V357.5H6.5Z" fill="#e9ad52"/>
<path d="M9 351.5H18.5M9 354H16" stroke="#fff" stroke-width="1"/>
<path d="M14 356H28.5V366H27V369.5L23.5 366H14Z" fill="#4b4b4b"/>
<path d="M17 359.5H25.5M17 362H25.5" stroke="#fff" stroke-width="1"/>
<!-- attachment -->
<path d="M13 413L24.5 401.5C26.5 399.5 26.5 397 25 395.5C23.5 394 21 394 19 396L10 405C7.8 407.2 7.8 410.5 10 412.5C12 414.5 15 414.3 17 412.3L25.5 403.8M12.5 409.3L20.5 401.3" fill="none" stroke="#2e6db4" stroke-width="1.9" stroke-linecap="round"/>
<!-- lock -->
<path d="M12.8 447.5V444C12.8 440.8 15 438.8 18.2 438.8C21.4 438.8 23.6 440.8 23.6 444V447.5" fill="none" stroke="#e9ad52" stroke-width="2.4"/>
<rect x="9" y="446.5" width="18.3" height="14.6" fill="#e9ad52"/>
<circle cx="18.2" cy="452.2" r="2" fill="#fff"/>
<path d="M17.2 452.5H19.2L19.8 458H16.6Z" fill="#fff"/>
<!-- sign -->
<path d="M9 504L17.8 495.5" stroke="#2e6db4" stroke-width="3.2" stroke-linecap="round"/>
<path d="M19.5 493.8L24.8 488.5" stroke="#2e6db4" stroke-width="3.2" stroke-linecap="round"/>
<path d="M16.5 489.5L21.8 484.5" stroke="#2e6db4" stroke-width="2" stroke-linecap="round"/>
<path d="M8 505.5L9.5 503.5" stroke="#2e6db4" stroke-width="1.4"/>
<path d="M20.8 500.5L18 506.5L20.5 505.8L21.5 507.2L23.5 501.5Z M24.8 500.5L27.6 506.5L25.1 505.8L24.1 507.2L22.1 501.5Z" fill="#8748a7"/>
<circle cx="22.8" cy="499.4" r="3.9" fill="#8748a7"/>
<circle cx="22.8" cy="499.4" r="2.1" fill="#f2d24a"/>
</svg>
<svg style="left:36px;top:176px" width="10" height="522" viewBox="36 176 10 522">
<path d="M39.5 378V421M41.5 378V421" stroke="#5a5a5a" stroke-width="1" stroke-dasharray="1 2"/>
</svg>
<!-- right scrollbar -->
<div class="a" style="left:1349px;top:177px;width:1px;height:522px;background:#fff"></div>
<svg style="left:1349px;top:176px" width="17" height="522" viewBox="1349 176 17 522">
<path d="M1352 180.8H1363M1352 182.6H1363" stroke="#000" stroke-width="1.1"/>
<path d="M1355.6 179.6L1357.5 177.8L1359.4 179.6ZM1355.6 183.8L1357.5 185.6L1359.4 183.8Z" fill="#000"/>
<path d="M1354.3 197.5L1357.5 193.3L1360.7 197.5" fill="none" stroke="#505050" stroke-width="2"/>
<rect x="1350" y="397" width="15" height="17" fill="#cdcdcd"/>
<path d="M1354.3 688.5L1357.5 692.7L1360.7 688.5" fill="none" stroke="#505050" stroke-width="2"/>
</svg>

<!-- ===== STATUS BAR ===== -->
<div class="a" style="left:0;top:699px;width:1366px;height:29px;background:#f0f0f0"></div>


<svg style="left:0;top:698px" width="1366" height="30" viewBox="0 698 1366 30">
<!-- nav buttons -->
<path d="M552 713.5L559 707V720Z M561.1 709.2L564 707V720L561.1 717.8Z" fill="#222" stroke="#fff" stroke-width="0.8" paint-order="stroke"/>
<path d="M586 707V720L579 713.5Z" fill="#222" stroke="#fff" stroke-width="0.8" paint-order="stroke"/>
<rect x="597.5" y="703.5" width="115" height="19" fill="#fff" stroke="#bdbdbd" stroke-width="1"/>
<path d="M703 712H708.5L705.75 715Z" fill="#111"/>
<path d="M721.4 707V720L728.6 713.5Z" fill="#222" stroke="#fff" stroke-width="0.8" paint-order="stroke"/>
<path d="M745 707L747.9 709.2V717.8L745 720Z M750 707L757 713.5L750 720Z" fill="#222" stroke="#fff" stroke-width="0.8" paint-order="stroke"/>
<!-- page icons -->
<rect x="768.7" y="706.8" width="9" height="8" fill="#fff" stroke="#7a7a7a" stroke-width="1"/>
<rect x="768.7" y="706.8" width="9" height="2" fill="#2e6db4"/>
<rect x="775.5" y="713" width="9.5" height="8.5" fill="#fff" stroke="#7a7a7a" stroke-width="1"/>
<path d="M777 716H784M777 718.5H784M779 714V721M782 714V721" stroke="#7a7a7a" stroke-width="0.8"/>
<path d="M785 708.5H780.5M782 706.8L780 708.5L782 710.2" stroke="#3a9e74" stroke-width="1.3" fill="none"/>
<g opacity="0.45">
<rect x="795.5" y="706.8" width="9" height="8" fill="#fff" stroke="#7a7a7a" stroke-width="1"/>
<rect x="801.5" y="713" width="9.5" height="8.5" fill="#fff" stroke="#7a7a7a" stroke-width="1"/>
<rect x="801.5" y="713" width="9.5" height="2" fill="#2e6db4"/>
<path d="M803 716H810M803 718.5H810M805 714V721M808 714V721" stroke="#7a7a7a" stroke-width="0.8"/>
<path d="M797 717.5H801.5M800 715.8L802 717.5L800 719.2" stroke="#3a9e74" stroke-width="1.3" fill="none"/>
</g>
<!-- view mode icons -->
<rect x="1030.8" y="707.7" width="9.5" height="12.6" fill="#fff" stroke="#6e6e6e" stroke-width="1.1"/>
<path d="M1032.3 710.5H1038.8M1032.3 713.5H1038.8M1032.3 716.5H1038.8" stroke="#9a9a9a" stroke-width="0.9"/>
<rect x="1050.2" y="705" width="23.6" height="17.8" fill="#d9bae6"/>
<rect x="1055.9" y="706.8" width="9.3" height="8" fill="#fff" stroke="#6e6e6e" stroke-width="1.1"/>
<path d="M1057.3 709.5H1063.8M1057.3 712.5H1063.8" stroke="#9a9a9a" stroke-width="0.9"/>
<path d="M1055.9 722V717.8H1065.2V722" fill="#fff" stroke="#6e6e6e" stroke-width="1.1"/>
<path d="M1057.3 720.5H1063.8" stroke="#9a9a9a" stroke-width="0.9"/>
<rect x="1079.7" y="708.5" width="5.4" height="10.7" fill="#fff" stroke="#6e6e6e" stroke-width="1.1"/>
<rect x="1087.7" y="708.5" width="5.5" height="10.7" fill="#fff" stroke="#6e6e6e" stroke-width="1.1"/>
<path d="M1081 711.5H1083.8M1081 714.5H1083.8M1081 717.3H1083.8M1089 711.5H1091.9M1089 714.5H1091.9M1089 717.3H1091.9" stroke="#9a9a9a" stroke-width="0.9"/>
<path d="M1104.9 706.8H1111.4V715H1104.9M1119.8 706.8H1113.6V715H1119.8M1104.9 717.8H1111.4V722.5M1119.8 717.8H1113.6V722.5" fill="none" stroke="#6e6e6e" stroke-width="1.1"/>
<path d="M1105 709.5H1110M1105 712.5H1110M1115 709.5H1119.8M1115 712.5H1119.8M1105 720.5H1110M1115 720.5H1119.8" stroke="#9a9a9a" stroke-width="0.9"/>
<!-- zoom -->
<path d="M1204.5 711.5H1210L1207.25 714.5Z" fill="#111"/>
<circle cx="1221" cy="713" r="6.3" fill="none" stroke="#333" stroke-width="1.1"/>
<path d="M1217.5 712.5H1224.5" stroke="#222" stroke-width="1.2"/>
<path d="M1236 713.5H1327" stroke="#333" stroke-width="1"/>
<rect x="1263.5" y="708.5" width="4.5" height="9" fill="#333"/>
<path d="M1281.5 710V716" stroke="#444" stroke-width="1"/>
<circle cx="1339.5" cy="712.6" r="7.3" fill="none" stroke="#333" stroke-width="1.1"/>
<path d="M1335.5 712.5H1343.5M1339.5 708.5V716.5" stroke="#222" stroke-width="1.2"/>
</svg>
<div class="t" style="left:603px;top:706px;color:#111;font-size:13px">59 / 140</div>
<div class="t" style="left:1143px;top:707px;font-size:12.8px;color:#333">69.64%</div>

<!-- ===== TASKBAR ===== -->

<div class="a" style="left:0;top:728px;width:1366px;height:40px;background:linear-gradient(100deg,#3fb0c9 0px,#37a5c0 58px,#2f97b6 300px,#2b8cae 1000px,#2a88ab 1366px)"></div>
<div class="a" style="left:0;top:728px;width:1366px;height:1px;background:#1f6f8c"></div>
<!-- buttons -->
<div class="a" style="left:59px;top:728px;width:133px;height:40px;border:1px solid #2a7f9f;background:#56adc6"><div class="a" style="left:0;top:0;right:0;bottom:0;border:1px solid #84c5d8"></div></div>
<div class="a" style="left:192px;top:728px;width:134px;height:40px;border:1px solid #2a7f9f;background:#56adc6"><div class="a" style="left:0;top:0;right:0;bottom:0;border:1px solid #84c5d8"></div></div>
<div class="a" style="left:326px;top:728px;width:133px;height:40px;border:1px solid #2a7f9f;background:#56adc6"><div class="a" style="left:0;top:0;right:0;bottom:0;border:1px solid #84c5d8"></div></div>
<div class="a" style="left:461px;top:728px;width:133px;height:40px;border:1px solid #2a7f9f;background:#56adc6"><div class="a" style="left:0;top:0;right:0;bottom:0;border:1px solid #84c5d8"></div></div>
<div class="a" style="left:597px;top:728px;width:132px;height:40px;border:1px solid #2a7f9f;background:#56adc6"><div class="a" style="left:0;top:0;right:0;bottom:0;border:1px solid #84c5d8"></div></div>
<div class="a" style="left:730px;top:728px;width:133px;height:40px;border:1px solid #2a7f9f;background:#56adc6"><div class="a" style="left:0;top:0;right:0;bottom:0;border:1px solid #84c5d8"></div></div>
<div class="a" style="left:865px;top:728px;width:133px;height:40px;border:1px solid #2a7f9f;background:linear-gradient(160deg,#7fb8cb,#88bdd0)"><div class="a" style="left:0;top:0;right:0;bottom:0;border:1px solid #e6f3f7"></div></div>
<div class="t" style="left:104px;top:742px;color:#fff">Математика ...</div>
<div class="t" style="left:237px;top:742px;color:#fff">Календарн...</div>
<div class="t" style="left:371px;top:742px;color:#fff">Математика ...</div>
<div class="t" style="left:506px;top:742px;color:#fff">Отправленн...</div>
<div class="t" style="left:642px;top:742px;color:#fff">матем қосы...</div>
<div class="t" style="left:775px;top:742px;color:#fff">1-сынып пл...</div>
<div class="t" style="left:910px;top:742px;color:#fff">Математика ...</div>
<div class="t" style="left:1254px;top:742px;color:#fff;font-size:12.8px">ҚАЗ</div>
<div class="t" style="left:1309px;top:735px;color:#fff">0:19</div>
<div class="t" style="left:1292px;top:751px;color:#fff;font-size:11px;width:56px;text-align:center">30.08.2016</div>
<svg style="left:0;top:728px" width="1366" height="40" viewBox="0 728 1366 40">
<defs>
<linearGradient id="wordg" x1="0" y1="0" x2="0" y2="1"><stop offset="0" stop-color="#b9cdee"/><stop offset="0.6" stop-color="#eef3fb"/><stop offset="1" stop-color="#fff"/></linearGradient>
<linearGradient id="folderg" x1="0" y1="0" x2="0.3" y2="1"><stop offset="0" stop-color="#fbf1c6"/><stop offset="1" stop-color="#e8cd6e"/></linearGradient>
</defs>
<!-- windows logo -->
<path d="M11 737.5L23.5 735.8V748.5H11Z M25 735.6L41 733.4V748.5H25Z M11 750H23.5V762.7L11 761Z M25 750H41V765L25 762.9Z" fill="#fff"/>
<!-- word icons -->
<g id="wicon">
<path d="M68.8 736C68.8 734.2 70.5 732.8 72.5 732.8H96.3V760.3H68.8Z" fill="url(#wordg)" stroke="#1a47a0" stroke-width="1.3"/>
<path d="M71.8 736.9H77.6L79.6 746.3L81 736.9H85.6L87 746.3L88.2 736.9H92.6L89.6 752.8H85.2L83.3 745L81.4 752.8H77Z" fill="#1f5bc4"/>
<path d="M72 758.5L90.5 748L97.9 749.8L95.7 758.9L72 759.6Z" fill="#fff" opacity="0.92"/>
<path d="M80 757.5L90 753.5" stroke="#b8c8e0" stroke-width="0.8"/>
</g>
<use href="#wicon" x="133"/>
<use href="#wicon" x="267"/>
<!-- chrome -->
<path d="M473.36 740.7A14.6 14.6 0 0 1 498.64 740.7L486 741.2L480.1 751.4Z" fill="#dd4b39"/>
<path d="M498.64 740.7A14.6 14.6 0 0 1 486 762.6L491.9 751.4L486 741.2Z" fill="#ffcd40"/>
<path d="M486 762.6A14.6 14.6 0 0 1 473.36 740.7L480.1 751.4L491.9 751.4Z" fill="#1da15a"/>
<circle cx="486" cy="748" r="6.9" fill="#fff"/>
<circle cx="486" cy="748" r="5.3" fill="#4a8af4"/>
<!-- folders -->
<g id="ficon">
<path d="M608.3 732.2L628.1 735.3V760.3L608.3 757.2Z" fill="url(#folderg)"/>
<path d="M608.3 732.2L628.1 735.3" stroke="#fbf0c0" stroke-width="1"/>
<path d="M610.4 733.2L615.6 737.4V759.2L613.5 763.4L608.8 758.5V733.5Z" fill="#f6e7a6"/>
<path d="M615.6 737.4V759.2" stroke="#fffbe8" stroke-width="1"/>
<path d="M623.4 751L629.7 750.4V760.3L623.4 760.8Z" fill="#efd46a"/>
<rect x="627" y="752.5" width="1.3" height="6" fill="#fff"/>
</g>
<use href="#ficon" x="133"/>
<!-- foxit active -->
<path d="M874 732H898L906 740V764H874Z" fill="#68246f"/>
<path d="M898 732V740H906Z" fill="#fff" opacity="0.9"/>
<path d="M876 734L904 762" stroke="#8a4a8f" stroke-width="3" opacity="0.5"/>
<path d="M898 738C893 735.5 884 736.5 882.5 744C881.5 750 886.5 753 890.5 752C895 751 897 747 895 744.5L889.5 746.5L891 744C892 742 888.5 741.5 887.5 744C886.5 746.8 888.5 749.3 891.5 748.5C886.5 751.5 883.5 747 885.5 743.5C887.5 739.8 894 738.5 898 738Z" fill="#fff"/>
<text x="889.5" y="762" font-family="Liberation Sans" font-size="8" font-weight="bold" fill="#fff" text-anchor="middle">PDF</text>

<!-- tray -->
<circle cx="1015.2" cy="749.3" r="7.7" fill="#d9262b"/>
<path d="M1009.5 746.5L1019.5 744M1012.5 748.5L1018 745.5M1011 753.5L1021 751" stroke="#f3a3a3" stroke-width="1.5"/>
<path d="M1032 745.5H1035L1040 741.8V756L1035 752.3H1032Z" fill="#fff" stroke="#222" stroke-width="0.8"/>
<path d="M1041.5 746C1042.8 747.5 1042.8 750.5 1041.5 752M1043.5 743.8C1046 746.5 1046 751.5 1043.5 754.2" fill="none" stroke="#fff" stroke-width="1"/>
<path d="M1063 742L1071 755.8H1055Z" fill="#d63b23" stroke="#b52a17" stroke-width="0.6"/>
<rect x="1062" y="745.5" width="2" height="5.5" fill="#fff"/>
<rect x="1062" y="752.3" width="2" height="1.8" fill="#fff"/>
<circle cx="1086.9" cy="749" r="8" fill="#fff"/>
<circle cx="1086.9" cy="749" r="4.5" fill="#ffc700"/>
<circle cx="1083" cy="746.8" r="1.8" fill="#f20d0d"/><circle cx="1090.8" cy="746.8" r="1.8" fill="#f20d0d"/><circle cx="1086.9" cy="753.5" r="1.8" fill="#f20d0d"/>
<circle cx="1086.9" cy="743.7" r="1.6" fill="#ffc700"/><circle cx="1082.5" cy="751.5" r="1.6" fill="#ffc700"/><circle cx="1091.3" cy="751.5" r="1.6" fill="#ffc700"/>
<circle cx="1086.9" cy="749" r="1.3" fill="#fff"/>
<circle cx="1110.5" cy="748.3" r="5.6" fill="#2a6fe0"/>
<circle cx="1109" cy="746.5" r="2.5" fill="#6aa0f5"/>
<path d="M1103.5 752.5C1101.5 753.5 1103 754.5 1107 753.5C1111 752.5 1116 750 1118 748C1119.5 746.5 1119 745.5 1116.5 746" fill="none" stroke="#e8e8e8" stroke-width="1.2"/>
<circle cx="1137.6" cy="746.4" r="5.6" fill="#3f78e6"/>
<rect x="1137" y="743" width="1.3" height="4" fill="#fff"/><rect x="1137" y="748" width="1.3" height="1.2" fill="#fff"/>
<rect x="1129" y="750" width="6.5" height="4" fill="#7ab2ff" stroke="#222" stroke-width="0.6"/>
<rect x="1128.5" y="754.5" width="7.5" height="2" fill="#ddd" stroke="#222" stroke-width="0.5"/>
<path d="M1152 745.5H1155L1160 741.8V756L1155 752.3H1152Z" fill="#e8653a" stroke="#3a1a10" stroke-width="0.8"/>
<path d="M1161.5 746C1162.8 747.5 1162.8 750.5 1161.5 752M1163.5 743.8C1166 746.5 1166 751.5 1163.5 754.2" fill="none" stroke="#4a2418" stroke-width="0.9"/>
<circle cx="1182.9" cy="749" r="7.5" fill="#f6a21a"/>
<path d="M1182.9 741.5A7.5 7.5 0 0 1 1190.4 749L1184 748Z" fill="#6fbf2a"/>
<path d="M1175.4 749A7.5 7.5 0 0 1 1182.9 741.5L1184 748Z" fill="#3b8fd6"/>
<path d="M1178 743A7.5 7.5 0 0 1 1188 742.5L1184 746Z" fill="#d83a2a"/>
<path d="M1200.5 741.5V745.5M1203.5 741.5V745.5M1199.5 745.5H1204.5V749H1202.8V756.5H1201.2V749H1199.5Z" fill="#fff" stroke="#fff" stroke-width="1"/>
<rect x="1206.3" y="743.8" width="8" height="12" rx="0.8" fill="none" stroke="#fff" stroke-width="1.4"/>
<rect x="1208.5" y="741.8" width="3.6" height="2" fill="#fff"/>
<rect x="1208.2" y="746" width="4.2" height="8" fill="#fff"/>
<path d="M1223.5 751H1226V754.5H1223.5Z M1227 749H1229.5V754.5H1227Z M1230.5 747H1233V754.5H1230.5Z M1234 745H1236.5V754.5H1234Z M1237.5 743H1240V754.5H1237.5Z" fill="#fff" stroke="#1a3a4a" stroke-width="0.6"/>
</svg>



</body></html>
